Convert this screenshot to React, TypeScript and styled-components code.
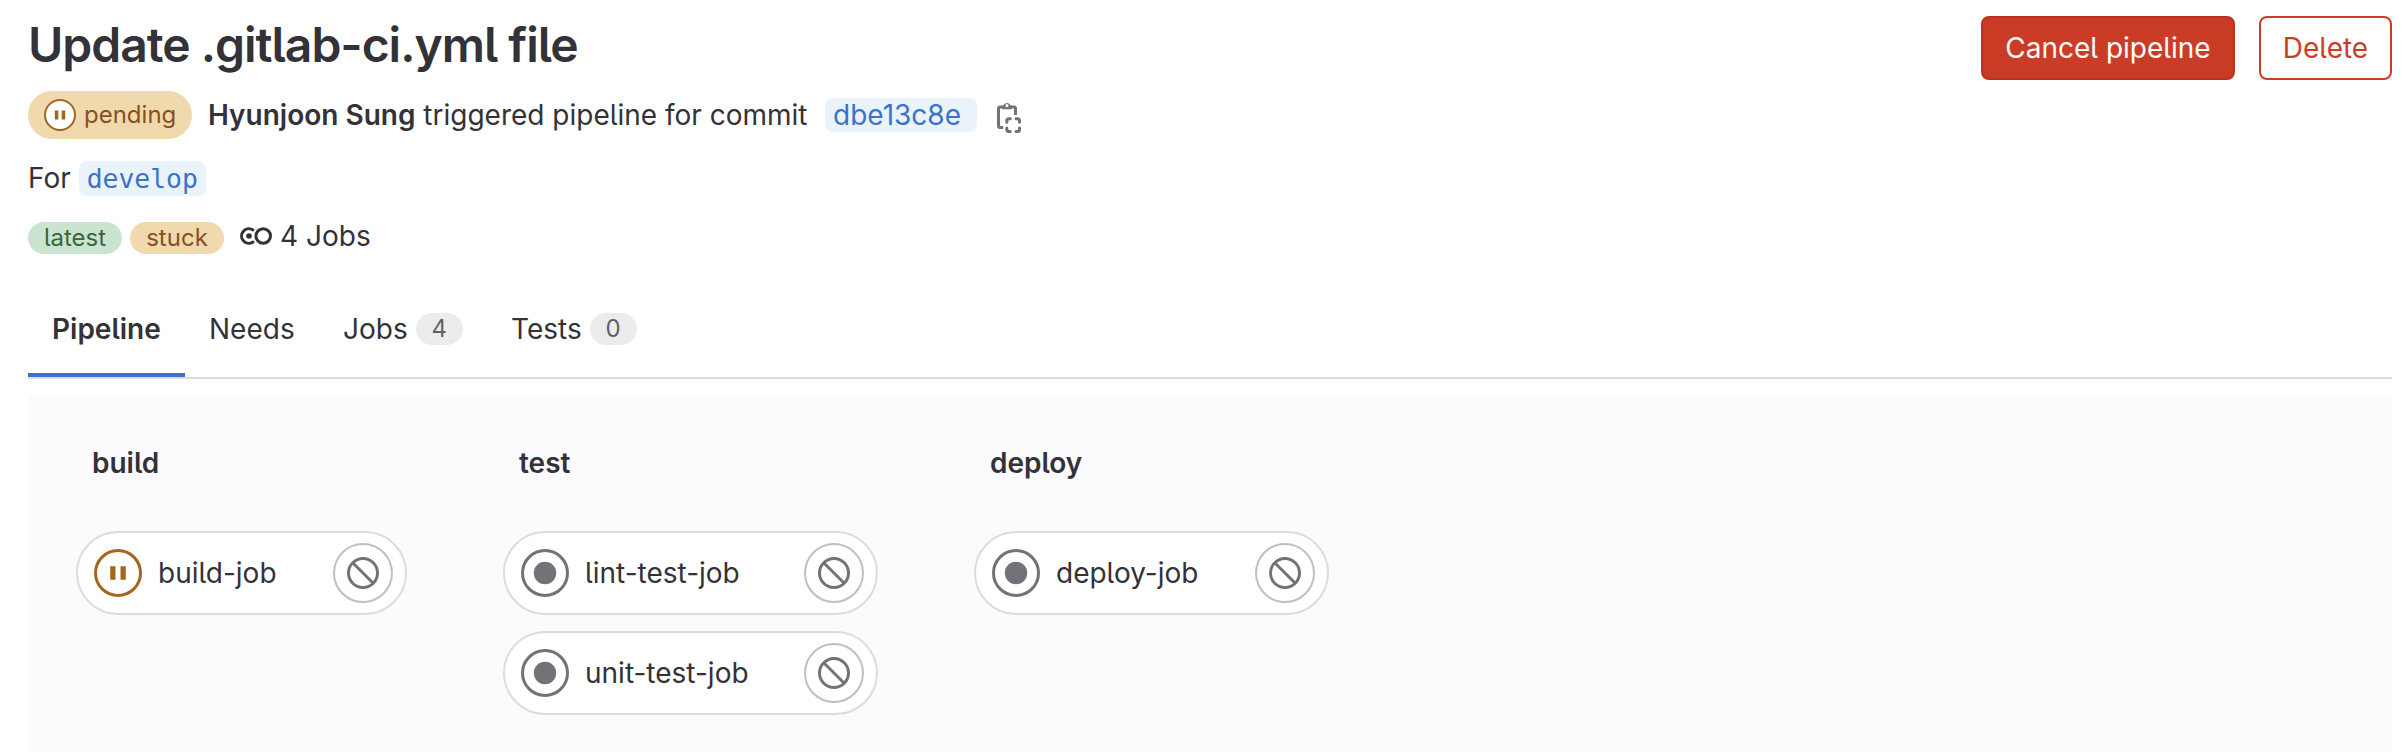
import React from "react";
import styled, { createGlobalStyle } from "styled-components";

const ink = "#333238";

const GlobalStyle = createGlobalStyle`
  *, *::before, *::after { box-sizing: border-box; }
  body {
    margin: 0;
    background: #fff;
    color: ${ink};
    font-family: Inter, "Liberation Sans", sans-serif;
    font-size: 28px;
    line-height: 40px;
    font-feature-settings: "cv05" 1;
    -webkit-font-smoothing: antialiased;
  }
  b { font-weight: 600; }
  svg { display: block; flex: none; }
`;

const Page = styled.main`
  height: 752px;
  overflow: hidden;
  padding: 16px 16px 0 28px;
  display: flex;
  flex-direction: column;
`;
const Header = styled.header`
  display: flex;
  justify-content: space-between;
  align-items: flex-start;
  height: 248px;
`;
const Details = styled.div`
  display: flex;
  flex-direction: column;
`;
const Title = styled.h1`
  margin: 0;
  height: 56px;
  line-height: 58px;
  font-size: 48px;
  font-weight: 600;
  letter-spacing: -1.01px;
  white-space: nowrap;
`;
const Line = styled.div<{ $top: number; $height: number }>`
  display: flex;
  align-items: center;
  margin-top: ${(p) => p.$top}px;
  height: ${(p) => p.$height}px;
  white-space: nowrap;
`;
const StatusBadge = styled.span`
  display: flex;
  align-items: center;
  gap: 8px;
  width: 164px;
  height: 48px;
  padding-left: 16px;
  border-radius: 24px;
  background: #f0d9ad;
  color: #87501f;
  font-size: 24px;
`;
const Summary = styled.span`
  width: 617px;
  margin-left: 16px;
`;
const CommitLink = styled.a`
  width: 152px;
  height: 34px;
  line-height: 34px;
  padding-left: 8px;
  border-radius: 8px;
  background: #eaf2fa;
  color: #3b73c8;
`;
const CopyButton = styled.button`
  margin: 4px 0 0 16px;
  padding: 0;
  border: 0;
  background: none;
  color: #737278;
`;
const RefLink = styled.a`
  margin-left: 8px;
  width: 127px;
  height: 35px;
  line-height: 35px;
  text-align: center;
  border-radius: 8px;
  background: #eaf2fa;
  color: #3b73c8;
  font-family: "DejaVu Sans Mono", monospace;
  font-size: 26.4px;
`;
const Tag = styled.span<{ $tone: "success" | "warning" }>`
  width: 94px;
  height: 32px;
  line-height: 32px;
  margin-right: 8px;
  border-radius: 16px;
  text-align: center;
  font-size: 24px;
  background: ${(p) => (p.$tone === "success" ? "#cae4d0" : "#f0d9ad")};
  color: ${(p) => (p.$tone === "success" ? "#396640" : "#87501f")};
`;
const JobTotal = styled.span`
  display: flex;
  align-items: center;
  gap: 8px;
  margin: 0 0 4px 8px;
`;
const Actions = styled.div`
  display: flex;
  gap: 24px;
`;
const Button = styled.button<{ $primary?: boolean; $width: number }>`
  width: ${(p) => p.$width}px;
  height: 64px;
  padding: 0;
  border: 2px solid ${(p) => (p.$primary ? "#b9321d" : "#cb3d27")};
  border-radius: 8px;
  background: ${(p) => (p.$primary ? "#cb3c26" : "#fff")};
  color: ${(p) => (p.$primary ? "#fff" : "#cb3d27")};
  font: inherit;
`;
const Tabs = styled.nav`
  display: flex;
  height: 115px;
  border-bottom: 2px solid #dcdcde;
`;
const Tab = styled.a<{ $active?: boolean; $width: number }>`
  display: flex;
  align-items: center;
  gap: 8px;
  width: ${(p) => p.$width}px;
  padding: 21px 0 0 24px;
  height: 113px;
  font-weight: ${(p) => (p.$active ? 600 : 400)};
  border-bottom: 4px solid ${(p) => (p.$active ? "#3b73c8" : "transparent")};
`;
const Count = styled.span`
  width: 47px;
  height: 32px;
  line-height: 32px;
  border-radius: 16px;
  background: #ececef;
  color: #626168;
  font-size: 24px;
  text-align: center;
`;
const Graph = styled.section`
  display: flex;
  gap: 96px;
  flex: 1;
  margin-top: 16px;
  padding: 48px 48px 0;
  background: #fbfafd;
`;
const Stage = styled.div<{ $width: number }>`
  display: flex;
  flex-direction: column;
  gap: 16px;
  width: ${(p) => p.$width}px;
`;
const StageName = styled.h2`
  margin: 0 0 32px 16px;
  height: 40px;
  font-size: 28px;
  line-height: 40px;
  font-weight: 600;
`;
const JobPill = styled.div`
  display: flex;
  align-items: center;
  height: 84px;
  padding: 0 12px 0 16px;
  border: 2px solid #dcdcde;
  border-radius: 42px;
  background: #fff;
`;
const JobName = styled.span`
  flex: 1;
  margin-left: 16px;
  white-space: nowrap;
`;
const CancelJob = styled.button`
  display: flex;
  align-items: center;
  justify-content: center;
  width: 60px;
  height: 60px;
  padding: 0;
  border: 2px solid #bfbfc3;
  border-radius: 50%;
  background: #fff;
  color: #737278;
`;

type Status = "pending" | "created";

const StatusIcon = ({ status, size }: { status: Status; size: number }) => (
  <svg width={size} height={size} viewBox="0 0 48 48">
    <circle
      cx="24"
      cy="24"
      r="22.5"
      fill="#fff"
      stroke={status === "pending" ? "#a3661f" : "#737278"}
      strokeWidth="3"
    />
    {status === "pending" ? (
      <path d="M16.2 17.2h5.3v13.6h-5.3zM26.5 17.2h5.3v13.6h-5.3z" fill="#a3661f" />
    ) : (
      <circle cx="24" cy="24" r="11.2" fill="#737278" />
    )}
  </svg>
);

const CancelIcon = () => (
  <svg width="32" height="32" viewBox="0 0 16 16" fill="none" stroke="currentColor" strokeWidth="1.5">
    <circle cx="8" cy="8" r="7.25" />
    <path d="M3 3l10 10" />
  </svg>
);

const ClipboardIcon = () => (
  <svg width="32" height="32" viewBox="0 0 32 32" fill="none" stroke="currentColor" strokeWidth="3">
    <path d="M10 6H7q-1.5 0-1.5 1.5V25q0 1.5 1.5 1.5h3.2M18 6h3q1.5 0 1.5 1.5V14" />
    <path
      d="M9.3 4.6h.8a4.2 4.2 0 0 1 7.8 0h.8v3.6H9.3zM14 3a1.6 1.6 0 1 0 0 3.2A1.6 1.6 0 0 0 14 3z"
      fill="currentColor"
      fillRule="evenodd"
      stroke="none"
    />
    <g strokeLinecap="round">
      <path d="M13.8 21.3v-1.5q0-2 2-2h1.5M23 17.8h1.5q2 0 2 2v1.5M26.5 27v1.5q0 2-2 2H23M17.3 30.5h-1.5q-2 0-2-2V27" />
    </g>
  </svg>
);

const PipelineIcon = () => (
  <svg width="32" height="32" viewBox="0 0 32 32" fill="none" stroke="currentColor" strokeWidth="3">
    <path d="M13 10A7.3 7.3 0 1 0 13 22" strokeLinecap="round" />
    <circle cx="23.2" cy="16" r="7.3" />
    <circle cx="9" cy="16" r="2.8" fill="currentColor" stroke="none" />
  </svg>
);

const stages: { name: string; width: number; jobs: { name: string; status: Status }[] }[] = [
  { name: "build", width: 331, jobs: [{ name: "build-job", status: "pending" }] },
  {
    name: "test",
    width: 375,
    jobs: [
      { name: "lint-test-job", status: "created" },
      { name: "unit-test-job", status: "created" },
    ],
  },
  { name: "deploy", width: 355, jobs: [{ name: "deploy-job", status: "created" }] },
];

export default function App() {
  return (
    <Page>
      <GlobalStyle />
      <Header>
        <Details>
          <Title>Update .gitlab-ci.yml file</Title>
          <Line $top={19} $height={48}>
            <StatusBadge>
              <StatusIcon status="pending" size={32} />
              pending
            </StatusBadge>
            <Summary>
              <b>Hyunjoon Sung</b> triggered pipeline for commit
            </Summary>
            <CommitLink>dbe13c8e</CommitLink>
            <CopyButton aria-label="Copy commit SHA">
              <ClipboardIcon />
            </CopyButton>
          </Line>
          <Line $top={19} $height={40}>
            For
            <RefLink>develop</RefLink>
          </Line>
          <Line $top={20} $height={40}>
            <Tag $tone="success">latest</Tag>
            <Tag $tone="warning">stuck</Tag>
            <JobTotal>
              <PipelineIcon />4 Jobs
            </JobTotal>
          </Line>
        </Details>
        <Actions>
          <Button $primary $width={254}>Cancel pipeline</Button>
          <Button $width={133}>Delete</Button>
        </Actions>
      </Header>
      <Tabs>
        <Tab $active $width={157}>Pipeline</Tab>
        <Tab $width={134}>Needs</Tab>
        <Tab $width={168}>
          Jobs<Count>4</Count>
        </Tab>
        <Tab $width={174}>
          Tests<Count>0</Count>
        </Tab>
      </Tabs>
      <Graph>
        {stages.map((stage) => (
          <Stage key={stage.name} $width={stage.width}>
            <StageName>{stage.name}</StageName>
            {stage.jobs.map((job) => (
              <JobPill key={job.name}>
                <StatusIcon status={job.status} size={48} />
                <JobName>{job.name}</JobName>
                <CancelJob aria-label={`Cancel ${job.name}`}>
                  <CancelIcon />
                </CancelJob>
              </JobPill>
            ))}
          </Stage>
        ))}
      </Graph>
    </Page>
  );
}
